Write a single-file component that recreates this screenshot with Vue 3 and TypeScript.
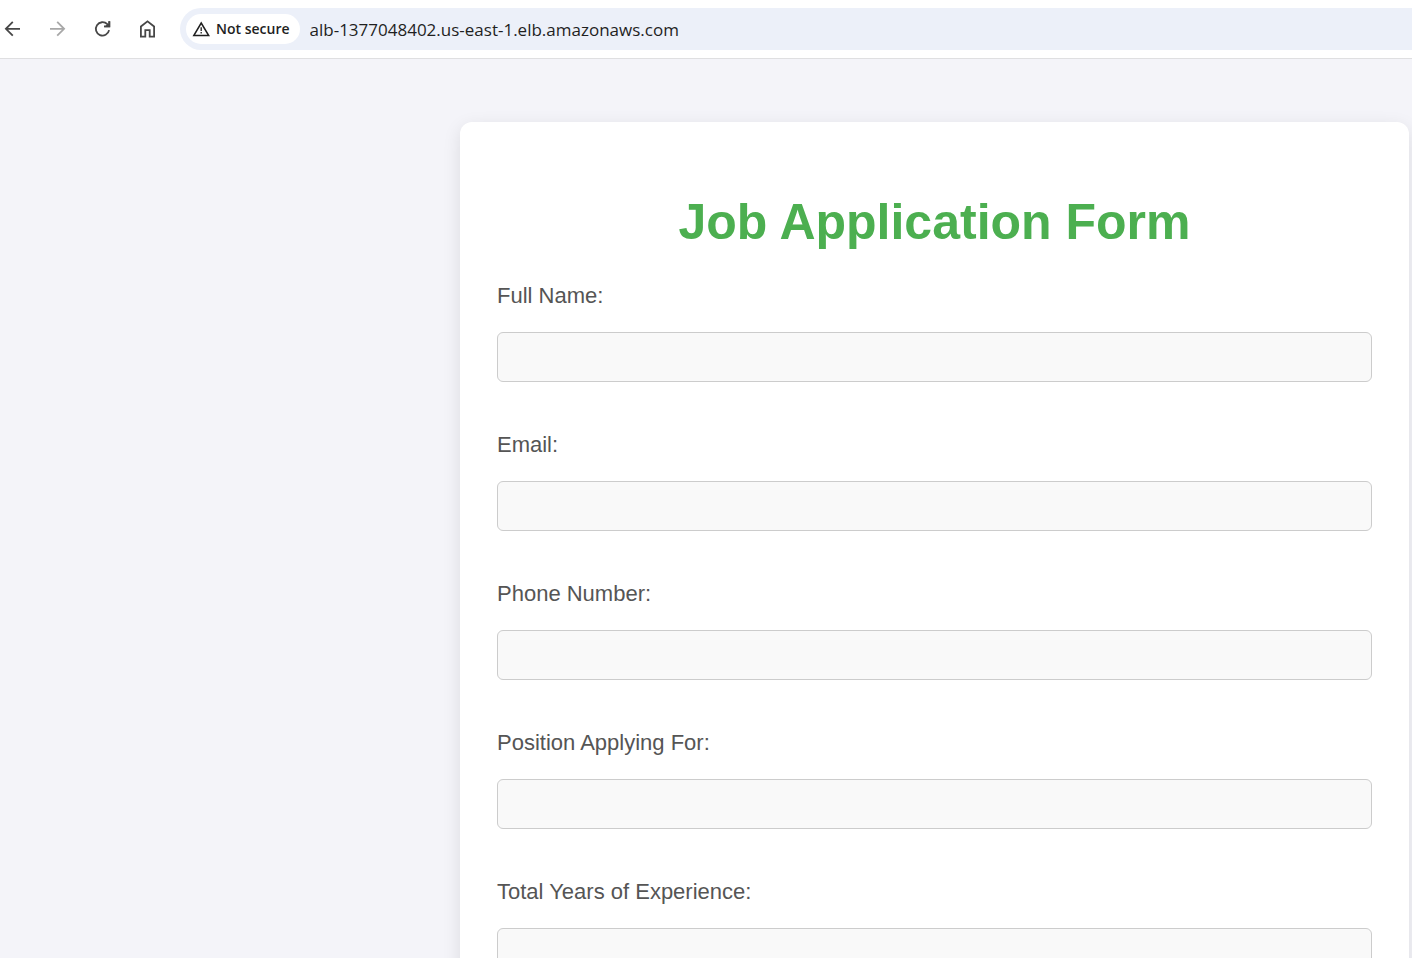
<script setup lang="ts">
import { reactive, ref } from 'vue'

interface Field {
  id: string
  label: string
  type: string
}

const address = ref('alb-1377048402.us-east-1.elb.amazonaws.com')

const fields: Field[] = [
  { id: 'full-name', label: 'Full Name:', type: 'text' },
  { id: 'email', label: 'Email:', type: 'email' },
  { id: 'phone', label: 'Phone Number:', type: 'tel' },
  { id: 'position', label: 'Position Applying For:', type: 'text' },
  { id: 'experience', label: 'Total Years of Experience:', type: 'text' },
]

const values = reactive<Record<string, string>>({})
</script>

<template>
  <div class="browser">
    <header class="toolbar">
      <nav class="nav" aria-label="Browser">
        <button class="nav-button" type="button" aria-label="Back">
          <svg viewBox="0 0 24 24"><path d="M20 11.800H6.200M12.800 4.900l-6.900 6.900 6.900 6.900" /></svg>
        </button>
        <button class="nav-button" type="button" aria-label="Forward" disabled>
          <svg viewBox="0 0 24 24"><path d="M5 11.800h13.800M12.200 4.900l6.900 6.900-6.900 6.900" /></svg>
        </button>
        <button class="nav-button" type="button" aria-label="Reload">
          <svg viewBox="0 0 24 24">
            <path d="M19.100 13.200A6.700 6.700 0 1 1 17.300 7.200L18.800 8.800M19.300 4.200V9.400H14" />
            <path class="solid" d="M20.200 4.200V10.200H14.200L16.600 7.800l1.800 0.600V4.200z" />
          </svg>
        </button>
        <button class="nav-button" type="button" aria-label="Home">
          <svg viewBox="0 0 24 24">
            <path d="M5.900 19.700V9.500L12.500 4.300l6.600 5.200v10.200h-4.400v-6.500h-4.400v6.500z" />
          </svg>
        </button>
      </nav>
      <div class="omnibox">
        <button class="security" type="button">
          <svg viewBox="0 0 18 18">
            <path d="M9.200 3L16.700 15.500H1.800z" />
            <path class="mark" d="M9.200 7.200v3.800M9.200 12v1.600" />
          </svg>
          <span>Not secure</span>
        </button>
        <input v-model="address" class="address" type="text" aria-label="Address" spellcheck="false" />
      </div>
    </header>

    <main class="page">
      <form class="card" @submit.prevent>
        <h1>Job Application Form</h1>
        <div v-for="field in fields" :key="field.id" class="field">
          <label :for="field.id">{{ field.label }}</label>
          <input :id="field.id" v-model="values[field.id]" :type="field.type" :name="field.id" />
        </div>
      </form>
    </main>
  </div>
</template>

<style>
body {
  margin: 0;
}
</style>

<style scoped>
* {
  box-sizing: border-box;
}

.browser {
  display: flex;
  flex-direction: column;
  height: 100vh;
  overflow: hidden;
  background: #f4f4f9;
}

.toolbar {
  display: flex;
  flex: none;
  padding: 8px 0;
  background: #fff;
  border-bottom: 1px solid #dfdfe1;
}

.nav {
  display: flex;
  flex: none;
  align-items: center;
  gap: 21px;
  margin-right: 21px;
}

button {
  padding: 0;
  border: 0;
  background: none;
}

.nav-button {
  width: 24px;
  height: 24px;
  color: #474747;
}

.nav-button:disabled {
  color: #a8a8a8;
}

.nav-button svg {
  display: block;
  width: 24px;
  height: 24px;
  fill: none;
  stroke: currentColor;
  stroke-width: 1.8;
}

.nav-button .solid {
  fill: currentColor;
  stroke: none;
}

.omnibox {
  display: flex;
  flex: 1;
  align-items: center;
  height: 42px;
  padding-left: 6px;
  gap: 10px;
  background: #ecf0f9;
  border-radius: 21px 0 0 21px;
}

.security {
  display: flex;
  flex: none;
  align-items: center;
  gap: 6px;
  height: 30px;
  padding: 0 10px 0 6px;
  color: #1f1f1f;
  background: #fff;
  border-radius: 15px;
  font: 600 14px/20px "Segoe UI", "Open Sans", "Noto Sans", sans-serif;
}

.security svg {
  width: 18px;
  height: 18px;
  fill: none;
  stroke: currentColor;
  stroke-width: 1.5;
}

.security .mark {
  stroke-width: 1.3;
}

.address {
  flex: 1;
  min-width: 0;
  height: 32px;
  padding: 0;
  border: 0;
  outline: 0;
  color: #1f1f1f;
  background: transparent;
  font: 17px/24px "Segoe UI", "Open Sans", "Noto Sans", sans-serif;
}

.page {
  flex: 1;
  min-height: 0;
  padding: 63px 3px 0 460px;
}

.card {
  padding: 72px 37px 37px;
  background: #fff;
  border-radius: 12px;
  box-shadow: 0 5px 18px rgba(0, 0, 0, 0.1);
  font-family: Arial, "Liberation Sans", sans-serif;
}

h1 {
  margin: 0 0 33px;
  color: #4caf50;
  font-size: 50px;
  font-weight: 700;
  line-height: 56px;
  text-align: center;
}

.field {
  margin-bottom: 50px;
}

.field label {
  display: block;
  margin-bottom: 23px;
  color: #555;
  font-size: 22px;
  line-height: 26px;
}

.field input {
  display: block;
  width: 100%;
  height: 50px;
  padding: 0 18px;
  border: 1px solid #ccc;
  border-radius: 6px;
  outline: 0;
  color: #333;
  background: #f9f9f9;
  font: inherit;
  font-size: 22px;
}
</style>
